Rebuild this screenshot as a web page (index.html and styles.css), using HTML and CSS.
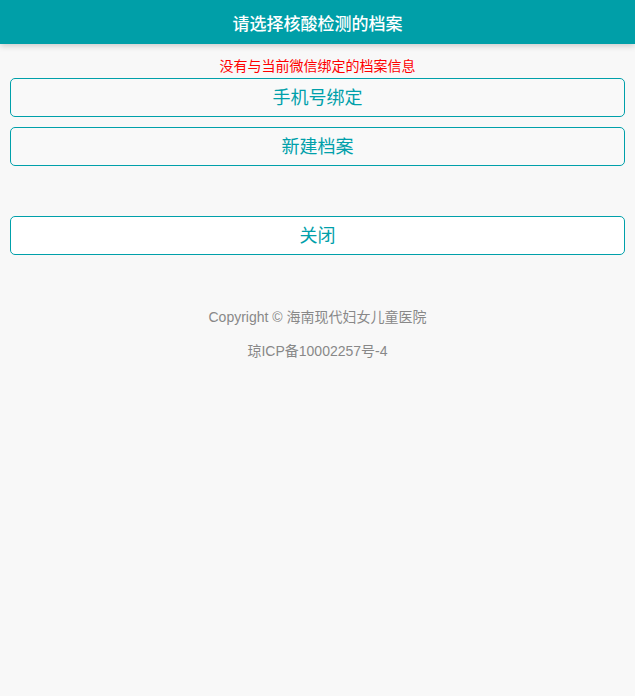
FILE: index.html
```html
<!DOCTYPE html>
<html lang="zh">
<head>
<meta charset="utf-8">
<link rel="stylesheet" href="styles.css">
</head>
<body>
<header class="topbar">请选择核酸检测的档案</header>
<main class="content">
  <p class="notice">没有与当前微信绑定的档案信息</p>
  <button class="btn btn-first">手机号绑定</button>
  <button class="btn">新建档案</button>
  <button class="btn btn-close">关闭</button>
</main>
<footer class="footer">
  <p class="copy">Copyright © 海南现代妇女儿童医院</p>
  <p class="icp">琼ICP备10002257号-4</p>
</footer>
</body>
</html>
```
FILE: styles.css
```css
html, body {
  margin: 0;
  padding: 0;
  background: #f8f8f8;
  font-family: "Liberation Sans", Arial, "Noto Sans CJK SC", sans-serif;
}
.topbar {
  height: 44px;
  background: #009fa8;
  color: #fff;
  font-size: 17px;
  font-weight: 500;
  font-family: "Noto Sans CJK SC", sans-serif;
  display: flex;
  align-items: center;
  justify-content: center;
  box-shadow: 0 2px 6px rgba(0,0,0,0.18);
}
.content {
  padding: 0 10px;
  display: flex;
  flex-direction: column;
}
.notice {
  margin: 12px 0 0;
  color: #ff0000;
  font-size: 14px;
  line-height: 18px;
  text-align: center;
  font-family: "Noto Sans CJK SC", sans-serif;
}
.btn {
  height: 39px;
  margin-top: 10px;
  border: 1px solid #00a0aa;
  border-radius: 5px;
  background: #f9f9f9;
  color: #00a0aa;
  font-size: 18px;
  font-family: "Noto Sans CJK SC", sans-serif;
  padding: 0 0 4px;
}
.btn-first { margin-top: 4px; }
.btn-close {
  margin-top: 50px;
  background: #fff;
}
.footer {
  margin-top: 44px;
  text-align: center;
  color: #888;
  font-size: 14px;
}
.copy { margin: 0; line-height: 36px; }
.icp { margin: 0; line-height: 32px; }
```
